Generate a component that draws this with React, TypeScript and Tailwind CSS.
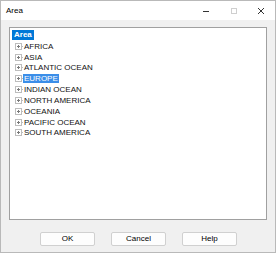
import React from "react";

const items = [
  "AFRICA",
  "ASIA",
  "ATLANTIC OCEAN",
  "EUROPE",
  "INDIAN OCEAN",
  "NORTH AMERICA",
  "OCEANIA",
  "PACIFIC OCEAN",
  "SOUTH AMERICA",
];

function Expander() {
  return (
    <svg width="9" height="7" viewBox="0 0 9 7" className="shrink-0">
      <rect x="0.5" y="0.5" width="6" height="6" fill="white" stroke="#bdbdbd" />
      <line x1="2" y1="3.5" x2="5" y2="3.5" stroke="#7a7a7a" />
      <line x1="3.5" y1="2" x2="3.5" y2="5" stroke="#7a7a7a" />
      <line x1="7" y1="3.5" x2="9" y2="3.5" stroke="#bdbdbd" strokeDasharray="1 1" />
    </svg>
  );
}

export default function App() {
  return (
    <div
      className="w-[276px] h-[254px] bg-white"
      style={{ fontFamily: '"Liberation Sans", Arial, sans-serif' }}
    >
      <div className="w-[276px] h-[253px] border border-[#b9b9b9] flex flex-col bg-[#f0f0f0]">
        {/* Title bar */}
        <div className="h-[19px] bg-white flex items-center shrink-0">
          <span className="pl-[5px] text-[8px] text-black leading-none">Area</span>
          <div className="ml-auto flex items-center">
            <svg width="8" height="8" viewBox="0 0 8 8" className="mr-[20px]">
              <line x1="1" y1="4.5" x2="7" y2="4.5" stroke="#333" />
            </svg>
            <svg width="8" height="8" viewBox="0 0 8 8" className="mr-[19px]">
              <rect x="1.5" y="1.5" width="5" height="5" fill="none" stroke="#cfcfcf" />
            </svg>
            <svg width="8" height="8" viewBox="0 0 8 8" className="mr-[10px]">
              <line x1="1" y1="1" x2="7" y2="7" stroke="#333" />
              <line x1="7" y1="1" x2="1" y2="7" stroke="#333" />
            </svg>
          </div>
        </div>
        {/* Body */}
        <div className="flex-1 flex flex-col px-[8px] pt-[7px]">
          <div className="h-[193px] bg-white border border-[#a0a0a0] pl-[2px] pt-[2px] text-[8px] text-[#111]">
            <div className="h-[10.8px] flex items-center">
              <span className="bg-[#0078d7] text-white font-bold px-[2px] leading-[10px]">
                Area
              </span>
            </div>
            {items.map((it) => (
              <div key={it} className="h-[10.85px] flex items-center pl-[3px]">
                <Expander />
                {it === "EUROPE" ? (
                  <span className="bg-[#3b8ee8] text-white px-[1px] ml-[-1px] leading-[9px]">
                    {it}
                  </span>
                ) : (
                  <span className="leading-[9px]">{it}</span>
                )}
              </div>
            ))}
          </div>
          <div className="flex justify-center gap-[16px] mt-[12px] pl-[1px]">
            {["OK", "Cancel", "Help"].map((b) => (
              <div
                key={b}
                className="w-[55px] h-[14px] bg-[#fdfdfd] border border-[#d0d0d0] rounded-[2px] flex items-center justify-center text-[8px] text-black"
              >
                {b}
              </div>
            ))}
          </div>
        </div>
      </div>
    </div>
  );
}
